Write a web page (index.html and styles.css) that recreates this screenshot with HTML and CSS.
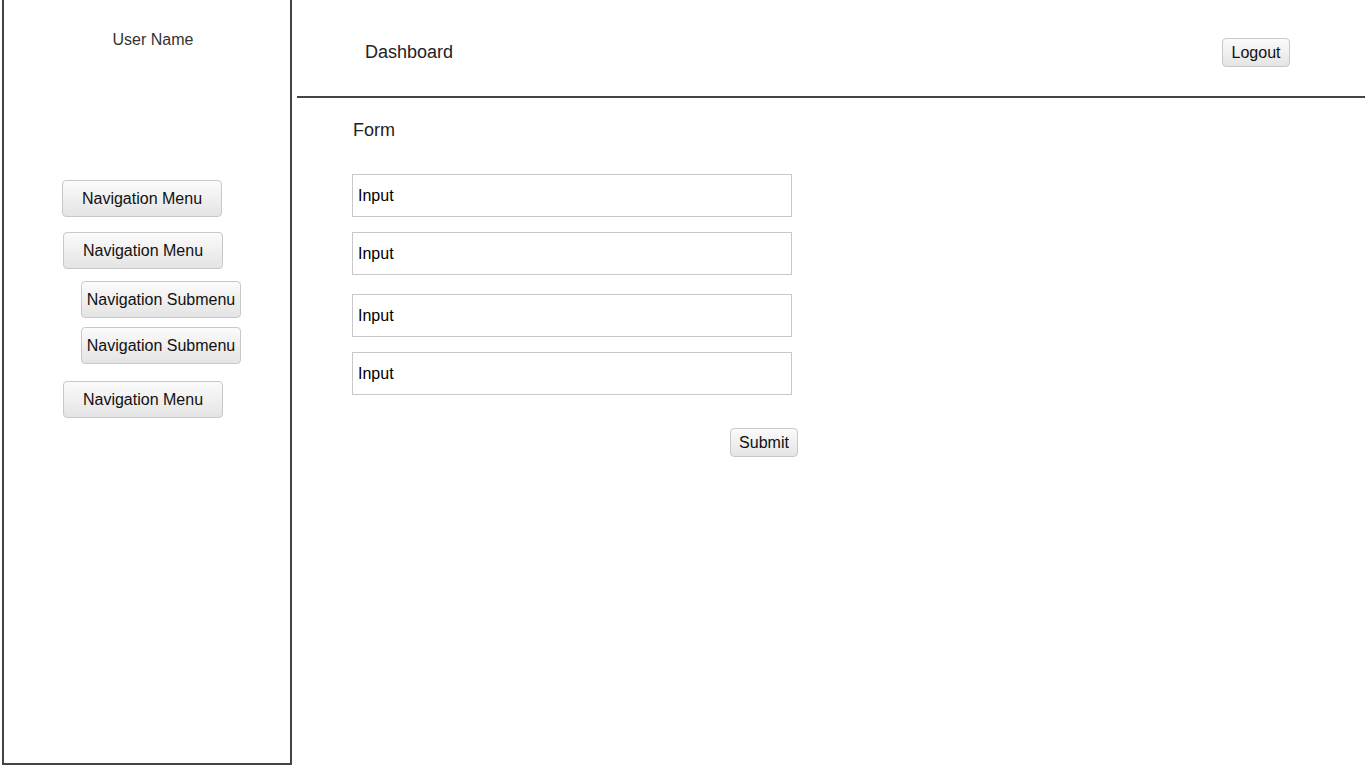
FILE: index.html
```html
<!DOCTYPE html>
<html>
<head>
<meta charset="utf-8">
<link rel="stylesheet" href="styles.css">
</head>
<body>
<div class="page">
  <aside class="sidebar">
    <div class="user-name">User Name</div>
    <nav class="nav">
      <button class="btn nav-menu nav-first">Navigation Menu</button>
      <button class="btn nav-menu nav-second">Navigation Menu</button>
      <button class="btn nav-sub nav-sub1">Navigation Submenu</button>
      <button class="btn nav-sub nav-sub2">Navigation Submenu</button>
      <button class="btn nav-menu nav-third">Navigation Menu</button>
    </nav>
  </aside>
  <main class="main">
    <header class="header">
      <div class="title">Dashboard</div>
      <button class="btn small-btn">Logout</button>
    </header>
    <section class="form-area">
      <div class="form-title">Form</div>
      <form class="form">
        <input class="field" type="text" value="Input">
        <input class="field f2" type="text" value="Input">
        <input class="field f3" type="text" value="Input">
        <input class="field f4" type="text" value="Input">
        <div class="actions">
          <button type="button" class="btn small-btn">Submit</button>
        </div>
      </form>
    </section>
  </main>
</div>
</body>
</html>
```

FILE: styles.css
```css
html, body {
  margin: 0;
  padding: 0;
  background: #fff;
  font-family: "Liberation Sans", Arial, sans-serif;
  color: #222;
  overflow: hidden;
}
.page {
  display: flex;
  width: 1365px;
  height: 765px;
}
.sidebar {
  margin-left: 2px;
  width: 286px;
  height: 763px;
  border-left: 2px solid #444;
  border-right: 2px solid #444;
  border-bottom: 2px solid #444;
  display: flex;
  flex-direction: column;
  flex-shrink: 0;
}
.user-name {
  margin-top: 31px;
  text-align: center;
  font-size: 16px;
  line-height: 18px;
  color: #333;
  padding-left: 12px;
}
.nav {
  display: flex;
  flex-direction: column;
  align-items: flex-start;
  margin-top: 131px;
}
.btn {
  font-family: "Liberation Sans", Arial, sans-serif;
  font-size: 16px;
  color: #111;
  background: linear-gradient(#fbfbfb, #e4e4e4);
  border: 1px solid #c8c8c8;
  border-radius: 4px;
  padding: 1px 0 0 0;
  cursor: pointer;
}
.nav .btn {
  width: 160px;
  height: 37px;
}
.nav-first { margin-left: 58px; }
.nav-second { margin-left: 59px; margin-top: 15px; }
.nav-sub1 { margin-left: 77px; margin-top: 12px; }
.nav-sub2 { margin-left: 77px; margin-top: 9px; }
.nav-third { margin-left: 59px; margin-top: 17px; }
.main {
  flex: 1;
  margin-left: 5px;
  display: flex;
  flex-direction: column;
}
.header {
  box-sizing: border-box;
  height: 98px;
  border-bottom: 2px solid #444;
  display: flex;
  align-items: center;
  justify-content: space-between;
  padding: 8px 75px 0 68px;
}
.title {
  font-size: 18px;
  color: #222;
}
.small-btn {
  width: 68px;
  height: 29px;
}
.form-area {
  padding-left: 55px;
}
.form-title {
  margin-top: 21px;
  font-size: 18px;
  line-height: 22px;
  color: #222;
  padding-left: 1px;
}
.form {
  display: flex;
  flex-direction: column;
  align-items: flex-start;
  margin-top: 33px;
  width: 446px;
}
.field {
  width: 440px;
  height: 43px;
  box-sizing: border-box;
  border: 1px solid #c8c8c8;
  padding: 1px 0 0 5px;
  margin: 0;
  font-family: "Liberation Sans", Arial, sans-serif;
  font-size: 16px;
  color: #000;
  outline: none;
}
.f2 { margin-top: 15px; }
.f3 { margin-top: 19px; }
.f4 { margin-top: 15px; }
.actions {
  align-self: stretch;
  display: flex;
  justify-content: flex-end;
  margin-top: 33px;
}
```
